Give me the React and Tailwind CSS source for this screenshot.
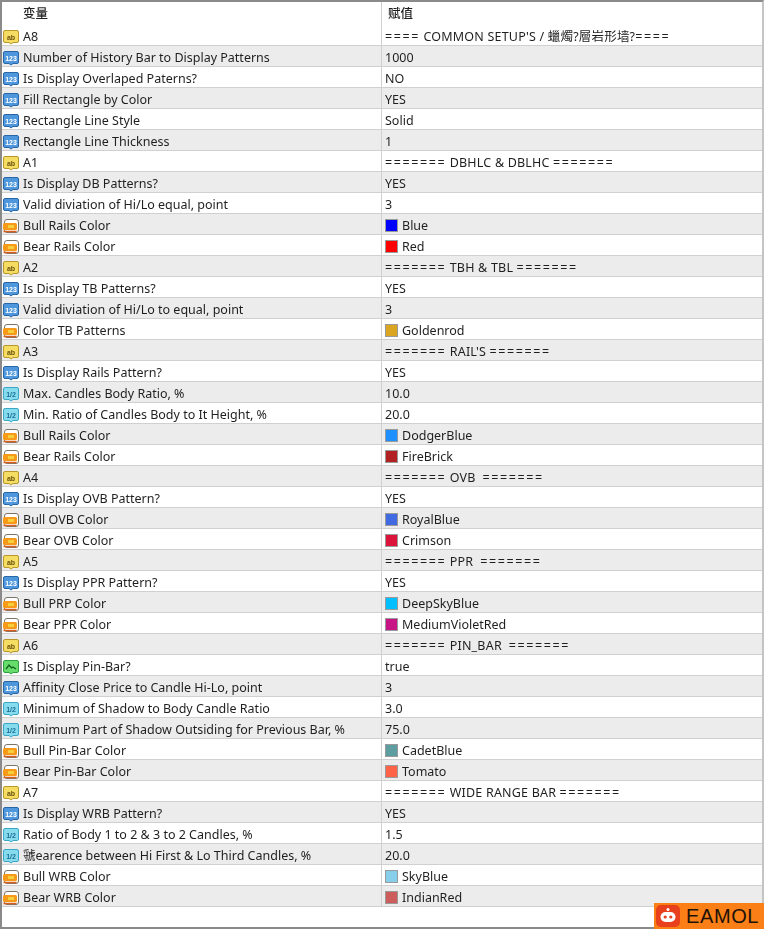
import React from "react";

const rows = [
  ["ab", "A8", "==== COMMON SETUP'S / 蠟燭?層岩形墙?===="],
  ["int", "Number of History Bar to Display Patterns", "1000"],
  ["int", "Is Display Overlaped Paterns?", "NO"],
  ["int", "Fill Rectangle by Color", "YES"],
  ["int", "Rectangle Line Style", "Solid"],
  ["int", "Rectangle Line Thickness", "1"],
  ["ab", "A1", "======= DBHLC & DBLHC ======="],
  ["int", "Is Display DB Patterns?", "YES"],
  ["int", "Valid diviation of Hi/Lo equal, point", "3"],
  ["color", "Bull Rails Color", "Blue", "bg-[#0000ff]"],
  ["color", "Bear Rails Color", "Red", "bg-[#ff0000]"],
  ["ab", "A2", "======= TBH & TBL ======="],
  ["int", "Is Display TB Patterns?", "YES"],
  ["int", "Valid diviation of Hi/Lo to equal, point", "3"],
  ["color", "Color TB Patterns", "Goldenrod", "bg-[#daa520]"],
  ["ab", "A3", "======= RAIL'S ======="],
  ["int", "Is Display Rails Pattern?", "YES"],
  ["dbl", "Max. Candles Body Ratio, %", "10.0"],
  ["dbl", "Min. Ratio of Candles Body to It Height, %", "20.0"],
  ["color", "Bull Rails Color", "DodgerBlue", "bg-[#1e90ff]"],
  ["color", "Bear Rails Color", "FireBrick", "bg-[#b22222]"],
  ["ab", "A4", "======= OVB  ======="],
  ["int", "Is Display OVB Pattern?", "YES"],
  ["color", "Bull OVB Color", "RoyalBlue", "bg-[#4169e1]"],
  ["color", "Bear OVB Color", "Crimson", "bg-[#dc143c]"],
  ["ab", "A5", "======= PPR  ======="],
  ["int", "Is Display PPR Pattern?", "YES"],
  ["color", "Bull PRP Color", "DeepSkyBlue", "bg-[#00bfff]"],
  ["color", "Bear PPR Color", "MediumVioletRed", "bg-[#c71585]"],
  ["ab", "A6", "======= PIN_BAR  ======="],
  ["bool", "Is Display Pin-Bar?", "true"],
  ["int", "Affinity Close Price to Candle Hi-Lo, point", "3"],
  ["dbl", "Minimum of Shadow to Body Candle Ratio", "3.0"],
  ["dbl", "Minimum Part of Shadow Outsiding for Previous Bar, %", "75.0"],
  ["color", "Bull Pin-Bar Color", "CadetBlue", "bg-[#5f9ea0]"],
  ["color", "Bear Pin-Bar Color", "Tomato", "bg-[#ff6347]"],
  ["ab", "A7", "======= WIDE RANGE BAR ======="],
  ["int", "Is Display WRB Pattern?", "YES"],
  ["dbl", "Ratio of Body 1 to 2 & 3 to 2 Candles, %", "1.5"],
  ["dbl", "虢earence between Hi First & Lo Third Candles, %", "20.0"],
  ["color", "Bull WRB Color", "SkyBlue", "bg-[#87ceeb]"],
  ["color", "Bear WRB Color", "IndianRed", "bg-[#cd5c5c]"],
];

const badge = {
  ab: { fill: "#f5dc62", stroke: "#b8982a", text: "ab", color: "#6b5410" },
  int: { fill: "#4f97dd", stroke: "#2767a8", text: "123", color: "#ffffff" },
  dbl: { fill: "#86dcec", stroke: "#3aa6c8", text: "1/2", color: "#1c6f99" },
};

const bubble = "M3 1.5h12a1.5 1.5 0 0 1 1.5 1.5v9a1.5 1.5 0 0 1-1.5 1.5H11l-2 1.5-2-1.5H3A1.5 1.5 0 0 1 1.5 12V3A1.5 1.5 0 0 1 3 1.5z";

const TypeIcon = ({ type }) => {
  if (type === "color") {
    return (
      <svg width="18" height="16" viewBox="0 0 18 16" className="mt-[3px] shrink-0">
        <rect x="2.5" y="1.5" width="14" height="13" rx="2.5" fill="#fff" stroke="#7d7468" />
        <rect x="1" y="5" width="14" height="7" rx="1.5" fill="#f79a1a" />
        <rect x="6" y="7" width="6" height="3" fill="#f6cf3c" />
        <path d="M1.5 13.5h13" stroke="#d9601c" strokeWidth="1.5" />
      </svg>
    );
  }
  if (type === "bool") {
    return (
      <svg width="18" height="16" viewBox="0 0 18 16" className="mt-[3px] shrink-0">
        <path d={bubble} fill="#66dc6a" stroke="#2f9e3f" />
        <path d="M4 10l3-4 2.5 3 1.5-1 3 2" fill="none" stroke="#14601f" strokeWidth="1.3" />
      </svg>
    );
  }
  const b = badge[type];
  return (
    <svg width="18" height="16" viewBox="0 0 18 16" className="mt-[3px] shrink-0">
      <path d={bubble} fill={b.fill} stroke={b.stroke} />
      <text x="9" y="10.5" textAnchor="middle" fontSize="7" fontWeight="700" fontFamily="Liberation Sans, sans-serif" fill={b.color}>{b.text}</text>
    </svg>
  );
};

// the = signs are wider in the picture than in Noto Sans
const Value = ({ text }) => (
  <span className="whitespace-pre pt-[4px]">
    {text.includes("=")
      ? text.split(/(=+)/).map((part, i) => (
          <span key={i} className={part.startsWith("=") ? "tracking-[1.6px]" : "tracking-[0.2px]"}>{part}</span>
        ))
      : text}
  </span>
);

const Row = ({ row, index }) => {
  const [type, name, value, swatch] = row;
  return (
    <div className={`flex h-[21px] items-center border-b border-[#d0d0d0] ${index % 2 ? "bg-[#ececec]" : "bg-white"}`}>
      <div className="flex h-full w-[379px] shrink-0 items-center gap-[3px]">
        <TypeIcon type={type} />
        <span className="whitespace-pre pt-[4px]">{name}</span>
      </div>
      <div className="flex h-full flex-1 items-center gap-[4px] border-l border-[#d0d0d0] pl-[3px]">
        {swatch && <span className={`mt-[2px] h-[13px] w-[13px] border border-[#9a9a9a] ${swatch}`} />}
        <Value text={value} />
      </div>
    </div>
  );
};

const App = () => {
  return (
    <div className="relative h-[929px] w-[764px] overflow-hidden bg-white font-['Noto_Sans','Noto_Sans_CJK_SC',sans-serif] text-[12.5px] text-[#1f1f1f]">
      <div className="h-full border-2 border-[#8a8a8a] border-r-[#c4c4c4] blur-[0.4px]">
        <div className="flex h-[23px] items-center">
          <span className="w-[379px] pl-[21px] pt-[2px] font-medium">变量</span>
          <span className="flex h-full items-center border-l border-[#d0d0d0] pl-[6px] pt-[2px] font-medium">赋值</span>
        </div>
        {rows.map((row, index) => (
          <Row key={index} row={row} index={index} />
        ))}
      </div>
      <div className="absolute bottom-0 right-0 flex h-[26px] w-[110px] items-center gap-[6px] bg-[#f97f16] pl-[2px]">
        <div className="flex h-[22px] w-[24px] items-center justify-center rounded-[5px] bg-[#e8401c]">
          <svg width="18" height="18" viewBox="0 0 18 18">
            <circle cx="9" cy="2.5" r="1.5" fill="#fff" />
            <rect x="1.5" y="5" width="15" height="10" rx="5" fill="#fff" />
            <circle cx="6.2" cy="10" r="1.6" fill="#e8401c" />
            <circle cx="11.8" cy="10" r="1.6" fill="#e8401c" />
          </svg>
        </div>
        <span className="font-['Liberation_Sans',sans-serif] text-[20px] leading-none tracking-[0.6px] text-[#1d1208]">EAMOL</span>
      </div>
    </div>
  );
};

export default App;
